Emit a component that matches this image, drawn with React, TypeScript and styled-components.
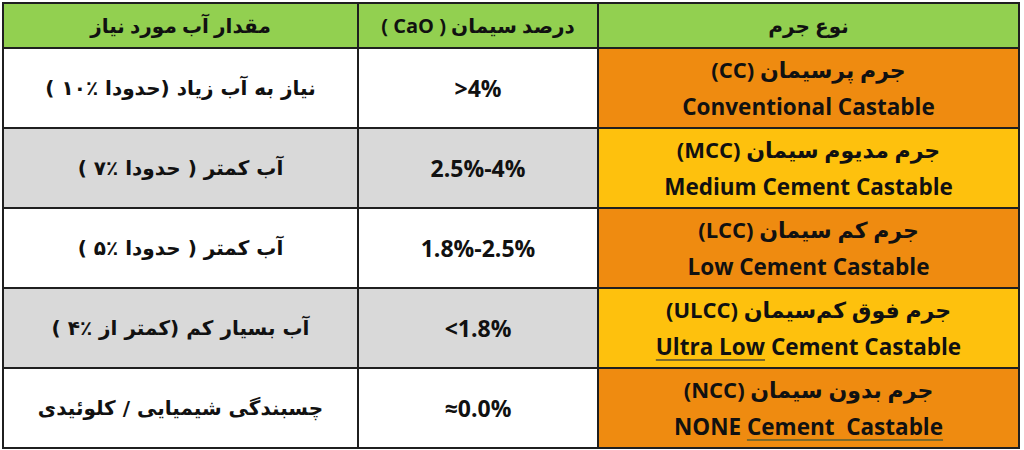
import styled, { createGlobalStyle } from 'styled-components'
import { FC } from 'react'

type Tone = 'orange' | 'yellow'

interface Castable {
	code: string
	name: string
	// english name split in parts, marked parts get the checker underline
	english: { text: string; marked?: boolean }[]
	cao: string
	water: string
	tone: Tone
}

const colors = {
	border: '#1f1f1f',
	green: '#92d050',
	orange: '#ef8b10',
	yellow: '#fec10d',
	grey: '#d9d9d9',
	white: '#ffffff',
	text: '#111111',
	mark: '#7d6a2c',
}

const rows: Castable[] = [
	{
		code: 'CC',
		name: 'جرم پرسیمان',
		english: [{ text: 'Conventional Castable' }],
		cao: '>4%',
		water: 'نیاز به آب زیاد (حدودا ٪۱۰ )',
		tone: 'orange',
	},
	{
		code: 'MCC',
		name: 'جرم مدیوم سیمان',
		english: [{ text: 'Medium Cement Castable' }],
		cao: '2.5%-4%',
		water: 'آب کمتر ( حدودا ٪۷ )',
		tone: 'yellow',
	},
	{
		code: 'LCC',
		name: 'جرم کم سیمان',
		english: [{ text: 'Low Cement Castable' }],
		cao: '1.8%-2.5%',
		water: 'آب کمتر ( حدودا ٪۵ )',
		tone: 'orange',
	},
	{
		code: 'ULCC',
		name: 'جرم فوق کم‌سیمان',
		english: [{ text: 'Ultra Low', marked: true }, { text: ' Cement Castable' }],
		cao: '<1.8%',
		water: 'آب بسیار کم (کمتر از ٪۴ )',
		tone: 'yellow',
	},
	{
		code: 'NCC',
		name: 'جرم بدون سیمان',
		english: [
			{ text: 'NONE ' },
			{ text: 'Cement\u00a0\u00a0Castable', marked: true },
		],
		cao: '≈0.0%',
		water: 'چسبندگی شیمیایی / کلوئیدی',
		tone: 'orange',
	},
]

const App: FC = () => {
	return (
		<>
			<GlobalStyle />
			<Page>
				<Table dir="rtl">
					<colgroup>
						<col style={{ width: 421 }} />
						<col style={{ width: 240 }} />
						<col style={{ width: 355 }} />
					</colgroup>
					<thead>
						<tr>
							<HeadCell>نوع جرم</HeadCell>
							<HeadCell>درصد سیمان ( CaO )</HeadCell>
							<HeadCell>مقدار آب مورد نیاز</HeadCell>
						</tr>
					</thead>
					<tbody>
						{rows.map((row, i) => (
							<tr key={row.code}>
								<TypeCell $tone={row.tone}>
									<Persian>
										{row.name} ({row.code})
									</Persian>
									<English dir="ltr">
										{row.english.map((part, j) =>
											part.marked ? (
												<Marked key={j}>{part.text}</Marked>
											) : (
												<span key={j}>{part.text}</span>
											)
										)}
									</English>
								</TypeCell>
								<Cell $shaded={i % 2 === 1}>
									<Percent dir="ltr">{row.cao}</Percent>
								</Cell>
								<Cell $shaded={i % 2 === 1}>
									<Water>{row.water}</Water>
								</Cell>
							</tr>
						))}
					</tbody>
				</Table>
			</Page>
		</>
	)
}

export default App

const GlobalStyle = createGlobalStyle`
	html, body {
		margin: 0;
		padding: 0;
		background: ${colors.white};
	}
	body {
		font-family: 'Open Sans', 'DejaVu Sans', sans-serif;
		color: ${colors.text};
	}
`

const Page = styled.div`
	width: 1024px;
	height: 450px;
	padding: 2px 0 0 2px;
	box-sizing: border-box;
	overflow: hidden;
`

const Table = styled.table`
	width: 1016px;
	border-collapse: collapse;
	table-layout: fixed;
	border: 2px solid ${colors.border};
`

const HeadCell = styled.th`
	height: 43px;
	padding: 0;
	background: ${colors.green};
	border: 2px solid ${colors.border};
	font-family: 'Open Sans', 'DejaVu Sans', sans-serif;
	font-size: 20px;
	font-weight: 700;
	text-align: center;
	vertical-align: middle;
`

const Cell = styled.td<{ $shaded: boolean }>`
	height: 78px;
	padding: 0;
	background: ${({ $shaded }) => ($shaded ? colors.grey : colors.white)};
	border: 2px solid ${colors.border};
	text-align: center;
	vertical-align: middle;
`

const TypeCell = styled.td<{ $tone: Tone }>`
	height: 78px;
	padding: 0;
	background: ${({ $tone }) => colors[$tone]};
	border: 2px solid ${colors.border};
	text-align: center;
	vertical-align: middle;
`

const Persian = styled.div`
	font-family: 'Open Sans', 'DejaVu Sans', sans-serif;
	font-size: 22px;
	font-weight: 700;
	line-height: 38px;
`

const English = styled.div`
	font-family: 'Open Sans', 'Liberation Sans', sans-serif;
	font-size: 22.5px;
	font-weight: 700;
	line-height: 38px;
	white-space: nowrap;
`

const Marked = styled.span`
	text-decoration: underline;
	text-decoration-color: ${colors.mark};
	text-decoration-thickness: 2px;
	text-underline-offset: 4px;
`

const Percent = styled.span`
	font-family: 'Open Sans', 'Liberation Sans', sans-serif;
	font-size: 23px;
	font-weight: 700;
`

const Water = styled.span`
	font-family: 'DejaVu Sans', sans-serif;
	font-size: 20px;
	font-weight: 700;
`
